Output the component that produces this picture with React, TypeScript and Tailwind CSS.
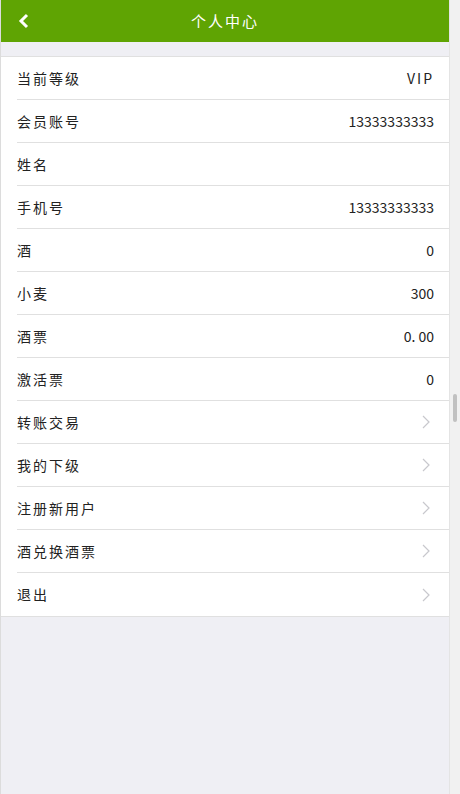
import React from "react";

type Row = { label: string; value?: string; link?: boolean };

const rows: Row[] = [
  { label: "当前等级", value: "VIP" },
  { label: "会员账号", value: "13333333333" },
  { label: "姓名", value: "" },
  { label: "手机号", value: "13333333333" },
  { label: "酒", value: "0" },
  { label: "小麦", value: "300" },
  { label: "酒票", value: "0.00" },
  { label: "激活票", value: "0" },
  { label: "转账交易", link: true },
  { label: "我的下级", link: true },
  { label: "注册新用户", link: true },
  { label: "酒兑换酒票", link: true },
  { label: "退出", link: true },
];

const Chevron = () => (
  <svg width="8" height="14" viewBox="0 0 8 14" fill="none">
    <path d="M1 1l6 6-6 6" stroke="#c8c8cd" strokeWidth="1.2" />
  </svg>
);

export default function App() {
  return (
    <div
      className="flex w-[460px] h-[794px] bg-[#efeff4]"
      style={{ fontFamily: '"Noto Sans CJK SC", "DejaVu Sans", sans-serif' }}
    >
      <div className="w-[449px] h-full border-l border-[#dcdcdc] flex flex-col">
        <header className="h-[42px] bg-[#5fa403] flex items-center relative">
          <svg className="absolute left-[17px] top-[13px]" width="12" height="16" viewBox="0 0 12 16" fill="none">
            <path d="M9 2L3 8l6 6" stroke="#fff" strokeWidth="3" />
          </svg>
          <h1 className="flex-1 text-center text-white text-[15px] tracking-[2px]">个人中心</h1>
        </header>
        <div className="h-[14px]" />
        <ul className="bg-white border-t border-b border-[#e0e0e0]">
          {rows.map((r, i) => (
            <li key={r.label} className="pl-4">
              <div
                className={
                  "h-[43px] flex items-center justify-between pr-[15px] " +
                  (i < rows.length - 1 ? "border-b border-[#e0e0e0]" : "")
                }
              >
                <span className="text-[14px] text-[#222] tracking-[2px]">{r.label}</span>
                {r.link ? (
                  <span className="pr-[4px]">
                    <Chevron />
                  </span>
                ) : (
                  <span
                    className={
                      "text-[14px] text-[#222] " + (r.value === "VIP" ? "tracking-[2px]" : "")
                    }
                  >
                    {r.value === "0.00" ? "0. 00" : r.value}
                  </span>
                )}
              </div>
            </li>
          ))}
        </ul>
      </div>
      <div className="flex-1 h-full bg-[#f1f1f1] border-l border-[#e4e4e4] pt-[394px] flex justify-center">
        <div className="w-[4px] h-[28px] bg-[#c1c1c1] rounded-sm" />
      </div>
    </div>
  );
}
